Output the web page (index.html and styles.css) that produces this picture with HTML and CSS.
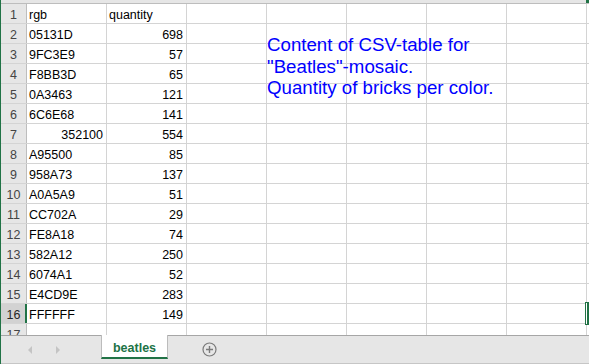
FILE: index.html
```html
<!DOCTYPE html>
<html lang="en">
<head>
    <meta charset="UTF-8">
    <title>beatles.csv</title>
    <link rel="stylesheet" href="styles.css">
</head>
<body>
    <div id="sheet">
        <div class="colhead"></div>
        <div class="row"><div class="rh">1</div><div class="cell">rgb</div><div class="cell">quantity</div><div class="cell"></div><div class="cell"></div><div class="cell"></div><div class="cell"></div><div class="cell"></div><div class="cell"></div></div>
        <div class="row"><div class="rh">2</div><div class="cell">05131D</div><div class="cell num">698</div><div class="cell"></div><div class="cell"></div><div class="cell"></div><div class="cell"></div><div class="cell"></div><div class="cell"></div></div>
        <div class="row"><div class="rh">3</div><div class="cell">9FC3E9</div><div class="cell num">57</div><div class="cell"></div><div class="cell"></div><div class="cell"></div><div class="cell"></div><div class="cell"></div><div class="cell"></div></div>
        <div class="row"><div class="rh">4</div><div class="cell">F8BB3D</div><div class="cell num">65</div><div class="cell"></div><div class="cell"></div><div class="cell"></div><div class="cell"></div><div class="cell"></div><div class="cell"></div></div>
        <div class="row"><div class="rh">5</div><div class="cell">0A3463</div><div class="cell num">121</div><div class="cell"></div><div class="cell"></div><div class="cell"></div><div class="cell"></div><div class="cell"></div><div class="cell"></div></div>
        <div class="row"><div class="rh">6</div><div class="cell">6C6E68</div><div class="cell num">141</div><div class="cell"></div><div class="cell"></div><div class="cell"></div><div class="cell"></div><div class="cell"></div><div class="cell"></div></div>
        <div class="row"><div class="rh">7</div><div class="cell num">352100</div><div class="cell num">554</div><div class="cell"></div><div class="cell"></div><div class="cell"></div><div class="cell"></div><div class="cell"></div><div class="cell"></div></div>
        <div class="row"><div class="rh">8</div><div class="cell">A95500</div><div class="cell num">85</div><div class="cell"></div><div class="cell"></div><div class="cell"></div><div class="cell"></div><div class="cell"></div><div class="cell"></div></div>
        <div class="row"><div class="rh">9</div><div class="cell">958A73</div><div class="cell num">137</div><div class="cell"></div><div class="cell"></div><div class="cell"></div><div class="cell"></div><div class="cell"></div><div class="cell"></div></div>
        <div class="row"><div class="rh">10</div><div class="cell">A0A5A9</div><div class="cell num">51</div><div class="cell"></div><div class="cell"></div><div class="cell"></div><div class="cell"></div><div class="cell"></div><div class="cell"></div></div>
        <div class="row"><div class="rh">11</div><div class="cell">CC702A</div><div class="cell num">29</div><div class="cell"></div><div class="cell"></div><div class="cell"></div><div class="cell"></div><div class="cell"></div><div class="cell"></div></div>
        <div class="row"><div class="rh">12</div><div class="cell">FE8A18</div><div class="cell num">74</div><div class="cell"></div><div class="cell"></div><div class="cell"></div><div class="cell"></div><div class="cell"></div><div class="cell"></div></div>
        <div class="row"><div class="rh">13</div><div class="cell">582A12</div><div class="cell num">250</div><div class="cell"></div><div class="cell"></div><div class="cell"></div><div class="cell"></div><div class="cell"></div><div class="cell"></div></div>
        <div class="row"><div class="rh">14</div><div class="cell">6074A1</div><div class="cell num">52</div><div class="cell"></div><div class="cell"></div><div class="cell"></div><div class="cell"></div><div class="cell"></div><div class="cell"></div></div>
        <div class="row"><div class="rh">15</div><div class="cell">E4CD9E</div><div class="cell num">283</div><div class="cell"></div><div class="cell"></div><div class="cell"></div><div class="cell"></div><div class="cell"></div><div class="cell"></div></div>
        <div class="row"><div class="rh active">16</div><div class="cell">FFFFFF</div><div class="cell num">149</div><div class="cell"></div><div class="cell"></div><div class="cell"></div><div class="cell"></div><div class="cell"></div><div class="cell"></div></div>
        <div class="row last"><div class="rh">17</div><div class="cell"></div><div class="cell"></div><div class="cell"></div><div class="cell"></div><div class="cell"></div><div class="cell"></div><div class="cell"></div><div class="cell"></div></div>

        <div class="note">Content of CSV-table for<br>"Beatles"-mosaic.<br>Quantity of bricks per color.</div>
        <div class="marquee"></div>
        <div class="corner"></div>
    </div>

    <div id="tabs">
        <div class="nav">
            <span class="arrow left"></span>
            <span class="arrow right"></span>
        </div>
        <div class="tab">beatles</div>
        <div class="add">
            <svg width="15" height="15" viewBox="0 0 15 15">
                <circle cx="7.5" cy="7.5" r="6.5" fill="none" stroke="#7a7a7a" stroke-width="1.2"/>
                <path d="M7.5 4 V11 M4 7.5 H11" stroke="#7a7a7a" stroke-width="1.4"/>
            </svg>
        </div>
    </div>
    <div class="edge"></div>
</body>
</html>
```

FILE: styles.css
```css
* {
    margin: 0;
    padding: 0;
    box-sizing: border-box;
}

body {
    width: 589px;
    height: 364px;
    overflow: hidden;
    position: relative;
    background: #fff;
    font-family: "Liberation Sans", Arial, sans-serif;
}

#sheet {
    position: relative;
    height: 335px;
    overflow: hidden;
}

.colhead {
    height: 4px;
    background: #e6e6e6;
    border-bottom: 1px solid #bdbdbd;
}

.row {
    display: flex;
    height: 20px;
    border-bottom: 1px solid #d4d4d4;
}

.row.last {
    height: 11px;
    border-bottom: none;
}

.rh {
    flex: 0 0 27px;
    background: #e6e6e6;
    border-right: 1px solid #bdbdbd;
    color: #444;
    font-size: 12.5px;
    line-height: 14px;
    text-align: center;
    padding-top: 4px;
    padding-left: 1px;
}

.rh.active {
    background: #d2d2d2;
    border-right: 2px solid #217346;
    color: #262626;
    padding-left: 2px;
}

.cell {
    flex: 0 0 80px;
    border-right: 1px solid #d4d4d4;
    font-size: 12.5px;
    line-height: 14px;
    color: #000;
    padding: 4px 3px 0 2px;
    white-space: nowrap;
}

.cell.num {
    text-align: right;
}

.note {
    position: absolute;
    left: 267px;
    top: 34px;
    color: #0000ff;
    font-size: 18.7px;
    line-height: 21.5px;
    white-space: nowrap;
}

.marquee {
    position: absolute;
    right: 0;
    top: 302px;
    width: 4px;
    height: 23px;
    background: #217346;
    border: 1px solid #217346;
    box-shadow: inset 1px 0 0 #fff;
}

.corner {
    position: absolute;
    right: 0;
    top: 0;
    width: 3px;
    height: 3px;
    background: #217346;
}

#tabs {
    display: flex;
    height: 29px;
    background: #e6e6e6;
    border-bottom: 1px solid #c6c6c6;
    position: relative;
}

#tabs::before {
    content: "";
    position: absolute;
    left: 0;
    top: 0;
    width: 101px;
    height: 1px;
    background: #a6a6a6;
}

#tabs::after {
    content: "";
    position: absolute;
    left: 168px;
    right: 0;
    top: 0;
    height: 1px;
    background: #a6a6a6;
}

.nav {
    width: 101px;
    display: flex;
    align-items: center;
    padding-left: 28px;
    gap: 24px;
}

.arrow {
    width: 0;
    height: 0;
    border-top: 4px solid transparent;
    border-bottom: 4px solid transparent;
    margin-top: 1px;
}

.arrow.left {
    border-right: 4px solid #c4c4c4;
}

.arrow.right {
    border-left: 4px solid #c4c4c4;
}

.tab {
    width: 67px;
    height: 24px;
    background: #fff;
    border-left: 1px solid #bcbcbc;
    border-right: 1px solid #bcbcbc;
    border-bottom: 2px solid #217346;
    color: #217346;
    font-weight: bold;
    font-size: 12.5px;
    line-height: 22px;
    text-align: center;
    padding-top: 2px;
}

.add {
    margin-left: 34px;
    display: flex;
    align-items: center;
    padding-top: 1px;
}

.add svg {
    display: block;
}

.edge {
    position: absolute;
    left: 0;
    top: 0;
    width: 1px;
    height: 364px;
    background: #217346;
}
```
